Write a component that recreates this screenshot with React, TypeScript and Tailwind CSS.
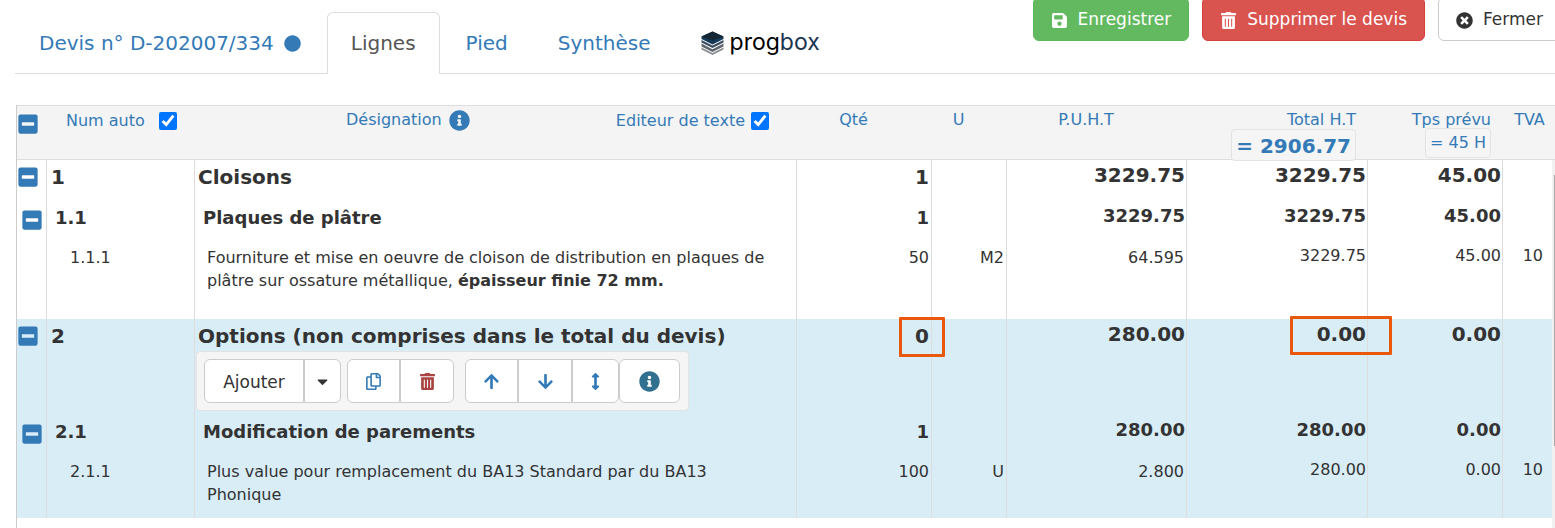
import React from "react";
import {
  FaArrowDown,
  FaArrowsAltV,
  FaArrowUp,
  FaCaretDown,
  FaCircle,
  FaInfoCircle,
  FaMinusSquare,
  FaRegCopy,
  FaSave,
  FaTimesCircle,
  FaTrashAlt,
} from "react-icons/fa";

type Level = "chapter" | "section" | "line";

interface Row {
  num: string;
  level: Level;
  label: React.ReactNode;
  qty: string;
  unit?: string;
  price: string;
  total: string;
  time: string;
  vat?: string;
  height: string;
  selected?: boolean;
  toolbar?: boolean;
}

const rows: Row[] = [
  { num: "1", level: "chapter", label: "Cloisons", qty: "1", price: "3229.75", total: "3229.75", time: "45.00", height: "h-[41px]" },
  { num: "1.1", level: "section", label: "Plaques de plâtre", qty: "1", price: "3229.75", total: "3229.75", time: "45.00", height: "h-10" },
  {
    num: "1.1.1",
    level: "line",
    label: (
      <>
        Fourniture et mise en oeuvre de cloison de distribution en plaques de plâtre sur ossature métallique,{" "}
        <b>épaisseur finie 72 mm.</b>
      </>
    ),
    qty: "50",
    unit: "M2",
    price: "64.595",
    total: "3229.75",
    time: "45.00",
    vat: "10",
    height: "h-[78px]",
  },
  {
    num: "2",
    level: "chapter",
    label: "Options (non comprises dans le total du devis)",
    qty: "0",
    price: "280.00",
    total: "0.00",
    time: "0.00",
    height: "h-24",
    selected: true,
    toolbar: true,
  },
  { num: "2.1", level: "section", label: "Modification de parements", qty: "1", price: "280.00", total: "280.00", time: "0.00", height: "h-10", selected: true },
  {
    num: "2.1.1",
    level: "line",
    label: "Plus value pour remplacement du BA13 Standard par du BA13 Phonique",
    qty: "100",
    unit: "U",
    price: "2.800",
    total: "280.00",
    time: "0.00",
    vat: "10",
    height: "h-[63px]",
    selected: true,
  },
];

const textStyle: Record<Level, string> = {
  chapter: "text-[20px] font-bold leading-6",
  section: "text-[18px] font-bold leading-6",
  line: "text-[16px] leading-[23px]",
};
const numIndent: Record<Level, string> = { chapter: "pl-1", section: "pl-2", line: "pl-[23px]" };
const labelIndent: Record<Level, string> = { chapter: "pl-[3px]", section: "pl-2", line: "pl-3" };
const iconPlace: Record<Level, string> = { chapter: "pt-1.5", section: "pt-2 pl-1", line: "" };

function Fold({ label }: { label: string }) {
  return (
    <button type="button" aria-label={label} className="block text-[22px] text-[#337ab7]">
      <FaMinusSquare />
    </button>
  );
}

function Tab({ active, children }: { active?: boolean; children: React.ReactNode }) {
  return (
    <li className="-mb-px mr-0.5">
      <a
        href="#"
        className={
          active
            ? "flex h-[62px] items-center rounded-t-md border border-b-0 border-[#ddd] bg-white px-[23px] pb-px text-[#555]"
            : "flex h-[62px] items-center px-6 text-[#337ab7]"
        }
      >
        {children}
      </a>
    </li>
  );
}

function Logo() {
  return (
    <span className="flex items-center gap-1.5">
      <svg width="23" height="24" viewBox="0 0 23 24" aria-hidden="true">
        <path d="M0.5 16.6 11.5 22 22.5 16.6V18.6L11.5 24 0.5 18.6Z" fill="#8a8d91" />
        <path d="M0.5 12.6 11.5 18.2 22.5 12.6V15.4L11.5 21 0.5 15.4Z" fill="#5f666e" />
        <path d="M0.5 9 11.5 14.6 22.5 9V11.4L11.5 17 0.5 11.4Z" fill="#3b4d60" />
        <path d="M11.5 0.6 22.5 5.6V8L11.5 13.6 0.5 8V5.6Z" fill="#173a58" />
        <path d="M11.5 0.6 22.5 5.6 11.5 9.6 0.5 5.6Z" fill="#142533" />
      </svg>
      <span className="-mt-0.5 font-['Inter',sans-serif] text-[23px] leading-6 text-black">
        prog<span className="text-[#1b3550]">box</span>
      </span>
    </span>
  );
}

const toolButton = "flex h-11 items-center justify-center border border-[#ccc] bg-white text-[17px]";

function Toolbar() {
  return (
    <div className="ml-px flex w-max rounded border border-[#e3e3e3] bg-[#f5f5f5] p-[7px] pr-2">
      <button type="button" className={`${toolButton} w-[100px] rounded-l-md pt-0.5 text-[#333]`}>
        Ajouter
      </button>
      <button type="button" aria-label="Plus de choix" className={`${toolButton} mr-1.5 w-[37px] rounded-r-md text-[#333]`}>
        <FaCaretDown />
      </button>
      <button type="button" aria-label="Copier" className={`${toolButton} w-[53px] rounded-l-md text-[#337ab7]`}>
        <FaRegCopy />
      </button>
      <button type="button" aria-label="Supprimer" className={`${toolButton} mr-[11px] w-[54px] rounded-r-md text-[#a94442]`}>
        <FaTrashAlt />
      </button>
      <button type="button" aria-label="Monter" className={`${toolButton} w-[53px] rounded-l-md text-[#337ab7]`}>
        <FaArrowUp />
      </button>
      <button type="button" aria-label="Descendre" className={`${toolButton} w-[54px] text-[#337ab7]`}>
        <FaArrowDown />
      </button>
      <button type="button" aria-label="Déplacer" className={`${toolButton} w-[47px] rounded-r-md text-[#337ab7]`}>
        <FaArrowsAltV />
      </button>
      <button type="button" aria-label="Informations" className={`${toolButton} w-[61px] rounded-md text-[#31708f]`}>
        <FaInfoCircle className="text-[21px]" />
      </button>
    </div>
  );
}

const mark = "pointer-events-none absolute rounded-[1px] border-[3px] border-[#ea580c]";
const cell = "border-r border-[#ddd] p-0 align-top";
const action = "flex h-11 items-center gap-2.5 rounded-md border px-[17px] pt-0.5 text-[17px]";

export default function App() {
  return (
    <div className="overflow-hidden bg-white font-['DejaVu_Sans',sans-serif] text-[16px] text-[#333]">
      <header className="ml-[15px] flex items-start justify-between border-b border-[#ddd]">
        <ul className="flex pt-3 text-[20px]">
          <Tab>
            Devis n° D-202007/334
            <FaCircle className="ml-2.5 text-[17px]" />
          </Tab>
          <Tab active>Lignes</Tab>
          <Tab>Pied</Tab>
          <Tab>Synthèse</Tab>
          <Tab>
            <Logo />
          </Tab>
        </ul>
        <div className="-mt-[3px] -mr-1.5 flex shrink-0 gap-[13px]">
          <button type="button" className={`${action} border-[#5cb85c] bg-[#62b95f] text-white`}>
            <FaSave />
            Enregistrer
          </button>
          <button type="button" className={`${action} border-[#d43f3a] bg-[#d9534f] text-white`}>
            <FaTrashAlt />
            Supprimer le devis
          </button>
          <button type="button" className={`${action} border-[#ccc] bg-white`}>
            <FaTimesCircle />
            Fermer
          </button>
        </div>
      </header>

      <main className="mt-[31px] ml-4 flex border-l border-[#ccc]">
        <table className="mb-2.5 w-full min-w-0 flex-1 table-fixed border-separate border-spacing-0">
          <colgroup>
            <col className="w-[30px]" />
            <col className="w-[148px]" />
            <col />
            <col className="w-[135px]" />
            <col className="w-[75px]" />
            <col className="w-[180px]" />
            <col className="w-[181px]" />
            <col className="w-[135px]" />
            <col className="w-[49px]" />
          </colgroup>
          <thead className="text-[#337ab7]">
            <tr className="h-[55px] bg-[#f4f4f4] *:border-y *:border-[#ddd] *:p-0 *:align-top *:font-normal *:leading-6">
              <th>
                <div className="pt-[7px]">
                  <Fold label="Tout replier" />
                </div>
              </th>
              <th>
                <label className="flex items-center gap-3.5 pt-[3px] pl-[19px]">
                  Num auto
                  <input type="checkbox" defaultChecked className="size-[18px]" />
                </label>
              </th>
              <th>
                <div className="flex items-start justify-between pr-7 pl-[151px]">
                  <span className="flex items-center gap-[7px] pt-0.5">
                    Désignation
                    <FaInfoCircle className="text-[21px]" />
                  </span>
                  <label className="flex items-center gap-1.5 pt-[3px]">
                    Editeur de texte
                    <input type="checkbox" defaultChecked className="size-[18px]" />
                  </label>
                </div>
              </th>
              <th>
                <div className="pt-0.5 pr-[22px]">Qté</div>
              </th>
              <th>
                <div className="pt-0.5 pr-[22px]">U</div>
              </th>
              <th>
                <div className="pt-0.5 pr-[22px]">P.U.H.T</div>
              </th>
              <th>
                <div className="-mb-1 flex flex-col items-end pt-0.5 pr-3">
                  Total H.T
                  <span className="-mt-[3px] rounded border border-[#e3e3e3] bg-[#f5f5f5] px-1 pt-1 pb-0.5 text-[20px] font-bold leading-6">
                    = 2906.77
                  </span>
                </div>
              </th>
              <th>
                <div className="flex flex-col items-end pt-0.5 pr-3">
                  Tps prévu
                  <span className="-mt-1 rounded border border-[#e3e3e3] bg-[#f5f5f5] px-1 py-0.5 leading-6">= 45 H</span>
                </div>
              </th>
              <th>
                <div className="pt-0.5 pl-1">TVA</div>
              </th>
            </tr>
          </thead>
          <tbody>
            {rows.map((row) => {
              const text = textStyle[row.level];
              const base = `${cell} ${text} pt-[5px]`;
              const amount = `${cell} ${text} pt-[3px] pr-px text-right`;
              return (
                <tr key={row.num} className={`${row.height} ${row.selected ? "bg-[#d9edf7]" : "bg-white"}`}>
                  <td className={`${cell} ${iconPlace[row.level]}`}>
                    {row.level !== "line" && <Fold label={`Replier ${row.num}`} />}
                  </td>
                  <td className={`${base} ${numIndent[row.level]}`}>{row.num}</td>
                  <td className={`${base} ${labelIndent[row.level]} ${row.level === "line" ? "pr-5" : ""}`}>
                    {row.label}
                    {row.toolbar && (
                      <div className="mt-[3px] -ml-[3px] font-normal">
                        <Toolbar />
                      </div>
                    )}
                  </td>
                  <td className={`${base} relative pr-0.5 text-right`}>
                    {row.qty}
                    {row.toolbar && <span className={`${mark} -top-0.5 -right-3.5 h-10 w-[46px]`} />}
                  </td>
                  <td className={`${base} pr-0.5 text-right`}>{row.unit}</td>
                  <td className={row.level === "line" ? `${base} pr-0.5 text-right` : amount}>{row.price}</td>
                  <td className={`${amount} relative`}>
                    {row.total}
                    {row.toolbar && <span className={`${mark} -top-[3px] -right-[25px] h-[39px] w-[102px]`} />}
                  </td>
                  <td className={amount}>{row.time}</td>
                  <td className={`${text} pt-[3px] pr-[9px] text-right align-top`}>{row.vat}</td>
                </tr>
              );
            })}
          </tbody>
        </table>
        <div className="flex w-[3px] flex-col bg-[#f1f1f1]">
          <div className="h-[55px] border-y border-[#ddd] bg-[#f4f4f4]" />
          <div className="mt-[15px] ml-0.5 h-[271px] bg-[#a8a8a8]" />
        </div>
      </main>
    </div>
  );
}
